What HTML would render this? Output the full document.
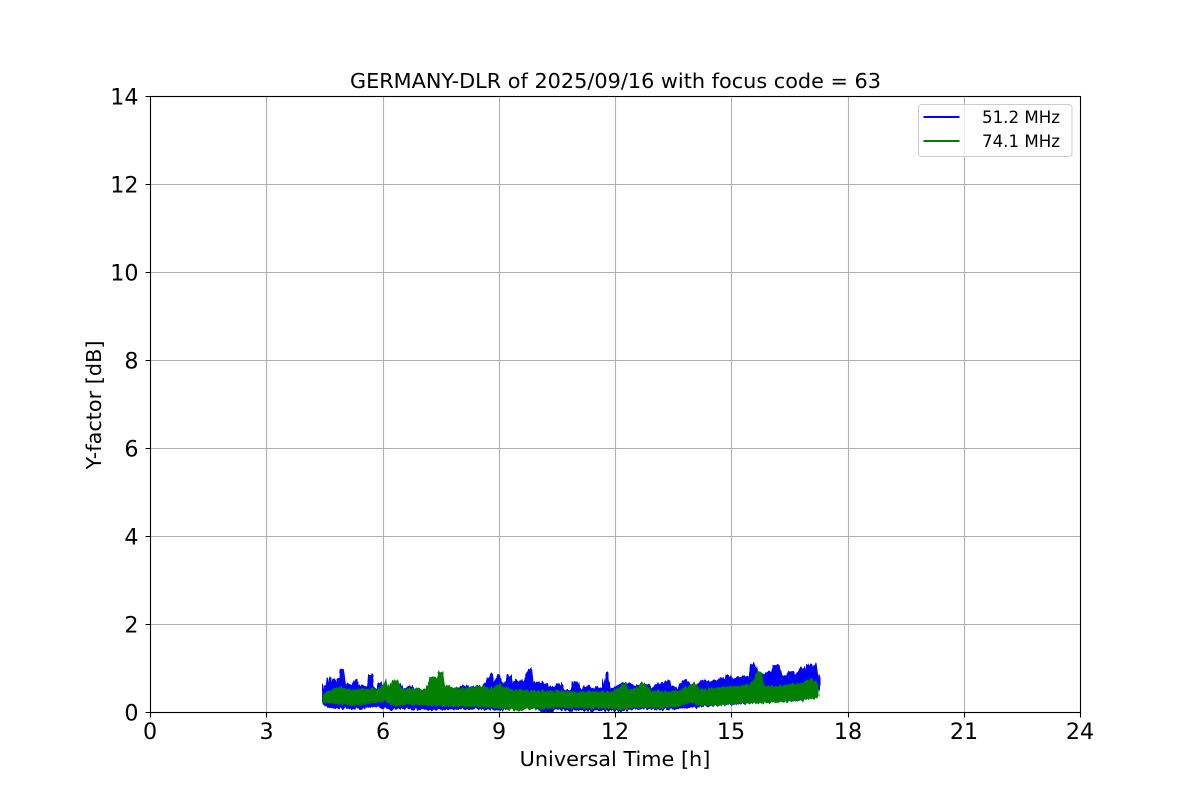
<!DOCTYPE html>
<html>
<head>
<meta charset="utf-8">
<style>
html,body{margin:0;padding:0;background:#fff;width:1200px;height:800px;overflow:hidden}
svg{display:block}
text{font-family:"DejaVu Sans","Liberation Sans",sans-serif;fill:#000}
.t{font-size:22.2px}
.l{font-size:20.8px}
.g{font-size:16.67px}
</style>
</head>
<body>
<svg width="1200" height="800" viewBox="0 0 1200 800" xmlns="http://www.w3.org/2000/svg">
<defs>
<filter id="rough" x="300" y="650" width="540" height="70" filterUnits="userSpaceOnUse" color-interpolation-filters="sRGB">
<feTurbulence type="fractalNoise" baseFrequency="0.45 0.02" numOctaves="2" seed="4" result="n"/>
<feDisplacementMap in="SourceGraphic" in2="n" scale="6" xChannelSelector="A" yChannelSelector="G"/>
</filter>
<clipPath id="ax"><rect x="150" y="96" width="931" height="616.5"/></clipPath>
</defs>
<rect width="1200" height="800" fill="#fff"/>
<g stroke="#b0b0b0" stroke-width="1.1" fill="none">
<path d="M266.5 96.5V712.5M383.5 96.5V712.5M499.5 96.5V712.5M615.5 96.5V712.5M731.5 96.5V712.5M848.5 96.5V712.5M964.5 96.5V712.5"/>
<path d="M150.5 624.5H1080.5M150.5 536.5H1080.5M150.5 448.5H1080.5M150.5 360.5H1080.5M150.5 272.5H1080.5M150.5 184.5H1080.5"/>
</g>
<g clip-path="url(#ax)">
<g filter="url(#rough)">
<path fill="#0000ff" stroke="#0000ff" stroke-width="2" stroke-linejoin="round" d="M324 703 L324 685 L326 684 L327 688 L328 678 L331 678 L332 686 L334 680 L336 686 L338 679 L340 679 L341 685 L342 670 L344 670 L345 685 L348 684 L350 687 L352 684 L354 682 L355 680 L357 680 L358 686 L362 687 L368 687 L369 675 L372 675 L373 688 L378 688 L379 684 L381 684 L382 688 L390 688 L400 684 L403 689 L412 687 L416 691 L430 689 L435 685 L439 685 L445 688 L452 690 L465 686 L470 688 L477 686 L479 687 L482 688 L485 684 L490 674 L492 674 L494 684 L498 675 L500 680 L503 684 L507 682 L509 676 L511 676 L513 686 L516 680 L520 684 L525 680 L528 670 L531 670 L533 684 L537 681 L541 684 L546 683 L548 687 L553 687 L556 686 L560 684 L563 690 L568 691 L572 691 L574 682 L577 682 L579 690 L582 690 L585 687 L589 687 L593 690 L597 687 L600 689 L603 689 L605 673 L608 673 L610 689 L615 688 L619 685 L622 684 L626 684 L631 685 L634 687 L638 685 L642 688 L648 685 L651 689 L656 686 L660 685 L667 682 L670 681 L672 687 L677 689 L681 684 L684 681 L686 681 L688 682 L691 687 L694 684 L697 686 L700 683 L703 681 L705 680 L708 681 L711 684 L714 680 L717 682 L720 679 L722 679 L725 681 L727 676 L729 676 L732 680 L735 678 L740 677 L745 676 L748 678 L752 665 L755 665 L758 674 L763 675 L768 673 L772 672 L775 665 L778 666 L782 676 L786 677 L790 672 L794 675 L797 674 L800 668 L803 668 L805 673 L808 665 L811 665 L813 668 L815 665 L817 670 L819 678 L819 690 L818 696 L800 700 L760 702 L700 706 L680 708 L655 709 L640 708 L620 710 L600 710 L570 710 L555 708 L552 712 L545 712 L535 708 L520 708 L500 709 L470 708 L440 709 L420 709 L405 708 L390 709 L375 706 L360 708 L340 708 L326 706 L324 703 Z"/>
<path fill="#008000" stroke="#008000" stroke-width="3" stroke-linejoin="round" d="M325 702 L325 693 L330 692 L335 690 L341 688 L345 690 L355 691 L368 690 L380 690 L384 686 L386 680 L388 691 L392 684 L396 680 L398 684 L399 688 L404 690 L425 690 L428 686 L431 679 L435 679 L437 678 L438 686 L439 673 L441 673 L443 685 L449 688 L460 690 L470 689 L480 687 L490 690 L500 686 L503 689 L510 690 L525 692 L540 692 L560 692 L570 693 L590 693 L612 693 L617 690 L625 685 L628 692 L635 690 L642 684 L645 685 L650 692 L665 693 L680 692 L690 686 L695 685 L698 691 L720 689 L740 687 L750 685 L755 682 L758 672 L761 673 L763 687 L780 688 L800 684 L810 682 L812 679 L815 682 L818 685 L818 696 L815 697 L808 698 L790 700 L760 702 L740 702 L720 704 L700 704 L690 701 L680 705 L670 706 L655 707 L640 706 L620 708 L600 707 L580 707 L555 706 L545 708 L528 707 L515 710 L505 707 L490 706 L470 705 L450 705 L430 704 L405 703 L396 705 L385 700 L372 702 L355 704 L340 703 L326 701 Z"/>
</g>
</g>
<g stroke="#000" stroke-width="1.1" fill="none">
<path d="M150.5 712.5V717.5M266.5 712.5V717.5M383.5 712.5V717.5M499.5 712.5V717.5M615.5 712.5V717.5M731.5 712.5V717.5M848.5 712.5V717.5M964.5 712.5V717.5M1080.5 712.5V717.5"/>
<path d="M145.5 712.5H150.5M145.5 624.5H150.5M145.5 536.5H150.5M145.5 448.5H150.5M145.5 360.5H150.5M145.5 272.5H150.5M145.5 184.5H150.5M145.5 96.5H150.5"/>
<rect x="150.5" y="96.5" width="930" height="616"/>
</g>
<g text-anchor="middle">
<text class="t" x="150" y="739">0</text>
<text class="t" x="266.5" y="739">3</text>
<text class="t" x="383" y="739">6</text>
<text class="t" x="499" y="739">9</text>
<text class="t" x="615" y="739">12</text>
<text class="t" x="731" y="739">15</text>
<text class="t" x="848" y="739">18</text>
<text class="t" x="964" y="739">21</text>
<text class="t" x="1080" y="739">24</text>
</g>
<g text-anchor="end">
<text class="t" x="138.5" y="720.5">0</text>
<text class="t" x="138.5" y="632.5">2</text>
<text class="t" x="138.5" y="544.5">4</text>
<text class="t" x="138.5" y="456.5">6</text>
<text class="t" x="138.5" y="368.5">8</text>
<text class="t" x="138.5" y="280.5">10</text>
<text class="t" x="138.5" y="192.5">12</text>
<text class="t" x="138.5" y="104.5">14</text>
</g>
<text class="l" x="615.5" y="88" text-anchor="middle">GERMANY-DLR of 2025/09/16 with focus code = 63</text>
<text class="l" x="615" y="766" text-anchor="middle">Universal Time [h]</text>
<text class="l" transform="translate(101 405) rotate(-90)" text-anchor="middle">Y-factor [dB]</text>
<rect x="918.5" y="104.5" width="153.5" height="52" rx="3" ry="3" fill="#fff" fill-opacity="0.8" stroke="#ccc" stroke-width="1"/>
<path d="M923.5 117H959.5" stroke="#0000ff" stroke-width="2" fill="none"/>
<path d="M923.5 141H959.5" stroke="#008000" stroke-width="2" fill="none"/>
<text class="g" x="1060" y="123" text-anchor="end">51.2 MHz</text>
<text class="g" x="1060" y="147" text-anchor="end">74.1 MHz</text>
</svg>
</body>
</html>
